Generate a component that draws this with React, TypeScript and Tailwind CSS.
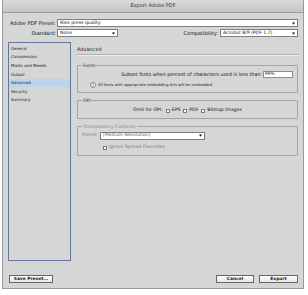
import type { ReactNode } from 'react';

const SECTIONS = ['General', 'Compression', 'Marks and Bleeds', 'Output', 'Advanced', 'Security', 'Summary'];

function Arrow() {
    return (
        <svg width="3" height="3" viewBox="0 0 4 4" className="shrink-0">
            <path d="M0 0.5H4L2 3.5Z" fill="#111" />
        </svg>
    );
}

function Select({ value, className = '', muted = false }: { value: string; className?: string; muted?: boolean }) {
    return (
        <div className={`h-[8px] bg-white border border-[#7e7e7e] flex items-center justify-between pl-[2px] pr-[2px] ${className}`}>
            <span className={`text-[4.6px] leading-none ${muted ? 'text-[#555]' : 'text-[#111]'}`}>{value}</span>
            <Arrow />
        </div>
    );
}

function Check({ label, muted = false }: { label: string; muted?: boolean }) {
    return (
        <label className="flex items-center gap-[2px]">
            <span className="w-[4px] h-[4px] bg-white border border-[#7a7a7a]" />
            <span className={muted ? 'text-[#7c7c7c]' : 'text-[#111]'}>{label}</span>
        </label>
    );
}

function Group({ title, muted = false, className = '', children }: { title: string; muted?: boolean; className?: string; children: ReactNode }) {
    return (
        <fieldset className={`border border-[#a5a5a5] rounded-[1px] ${className}`}>
            <legend className={`ml-[4px] px-[1px] text-[4.6px] leading-[5px] ${muted ? 'text-[#8a8a8a]' : 'text-[#333]'}`}>{title}</legend>
            {children}
        </fieldset>
    );
}

function Button({ children, className = '' }: { children: ReactNode; className?: string }) {
    return (
        <button className={`h-[8px] border border-[#666] bg-gradient-to-b from-white to-[#e6e6e6] text-[4.4px] font-bold leading-none text-[#1a1a1a] flex items-center justify-center ${className}`}>
            {children}
        </button>
    );
}

export default function App() {
    return (
        <div className="w-[308px] h-[295px] bg-white font-['DejaVu_Sans',sans-serif] overflow-hidden">
            <div className="ml-[2px] w-[302px] h-[289px] bg-[#d6d6d6] border border-t-0 border-[#9a9a9a] flex flex-col">
                {/* Title bar */}
                <div className="h-[13px] shrink-0 bg-gradient-to-b from-[#dadada] to-[#c4c4c4] border-b border-[#9c9c9c] flex items-center justify-center">
                    <span className="text-[5px] text-[#333]">Export Adobe PDF</span>
                </div>

                <div className="flex-1 flex flex-col px-[5px]">
                    {/* Preset row */}
                    <div className="mt-[6px] flex items-center gap-[1px]">
                        <span className="w-[48px] text-right text-[5px] text-[#111] leading-none">Adobe PDF Preset:</span>
                        <Select value="Ries press quality" className="flex-1" />
                    </div>
                    <div className="mt-[2px] flex items-center">
                        <span className="w-[48px] mr-[1px] text-right text-[5px] text-[#111] leading-none">Standard:</span>
                        <Select value="None" className="w-[61px]" />
                        <span className="ml-auto mr-[2px] text-[5px] text-[#111] leading-none">Compatibility:</span>
                        <Select value="Acrobat 8/9 (PDF 1.7)" className="w-[78px]" />
                    </div>

                    {/* Main */}
                    <div className="mt-[5px] flex gap-[6px]">
                        <div className="w-[63px] h-[219px] border-[1.5px] border-[#62779a] pt-[1.5px]">
                            {SECTIONS.map((s) => (
                                <div
                                    key={s}
                                    className={`h-[8.6px] flex items-center pl-[2px] text-[4px] text-[#1a1a1a] ${s === 'Advanced' ? 'bg-[#bcd3ec]' : ''}`}
                                >
                                    {s}
                                </div>
                            ))}
                        </div>

                        <div className="flex-1 flex flex-col">
                            <div className="pt-[4px] pb-[2px] border-b border-[#b2b2b2] shadow-[0_1px_0_#ececec]">
                                <div className="text-[5px] leading-[6px] text-[#1a1a1a]">Advanced</div>
                            </div>

                            <Group title="Fonts" className="mt-[8px] pb-[3px]">
                                <div className="mt-[2.5px] flex items-center justify-end gap-[1px] pr-[4px] text-[4.8px] text-[#111]">
                                    <span>Subset fonts when percent of characters used is less than:</span>
                                    <div className="w-[30px] h-[7px] bg-white border border-[#8c8c8c] flex items-center pl-[1px] text-[4.4px]">99%</div>
                                </div>
                                <div className="mt-[3px] h-[8px] flex items-center gap-[2px] pl-[12px] text-[3.8px] text-[#222]">
                                    <svg width="6" height="6" viewBox="0 0 12 12">
                                        <circle cx="6" cy="6" r="5.2" fill="#f4f4f4" stroke="#555" strokeWidth="1.2" />
                                        <circle cx="6" cy="3.6" r="0.9" fill="#333" />
                                        <path d="M6 5.2V9" stroke="#333" strokeWidth="1.4" />
                                    </svg>
                                    <span>All fonts with appropriate embedding bits will be embedded.</span>
                                </div>
                            </Group>

                            <Group title="OPI" className="mt-[5.5px] pb-[4px]">
                                <div className="mt-[4.5px] h-[6px] flex items-center justify-center gap-[3px] text-[4.6px]">
                                    <span className="text-[#111]">Omit for OPI:</span>
                                    <Check label="EPS" />
                                    <Check label="PDF" />
                                    <Check label="Bitmap Images" />
                                </div>
                            </Group>

                            <Group title="Transparency Flattener" muted className="mt-[5.5px] pb-[4px]">
                                <div className="mt-[2.5px] flex items-center gap-[2px] pl-[4px] text-[4.6px]">
                                    <span className="text-[#858585]">Preset:</span>
                                    <Select value="[Medium Resolution]" muted className="w-[105px] h-[7px]" />
                                </div>
                                <div className="mt-[5px] h-[6px] flex items-center pl-[25px] text-[4.6px]">
                                    <Check label="Ignore Spread Overrides" muted />
                                </div>
                            </Group>
                        </div>
                    </div>

                    {/* Buttons */}
                    <div className="mt-auto mb-[5px] flex items-center">
                        <Button className="ml-[1px] w-[44px]">Save Preset...</Button>
                        <Button className="ml-auto w-[38px]">Cancel</Button>
                        <Button className="ml-[5px] w-[39px]">Export</Button>
                    </div>
                </div>
            </div>
        </div>
    );
}
